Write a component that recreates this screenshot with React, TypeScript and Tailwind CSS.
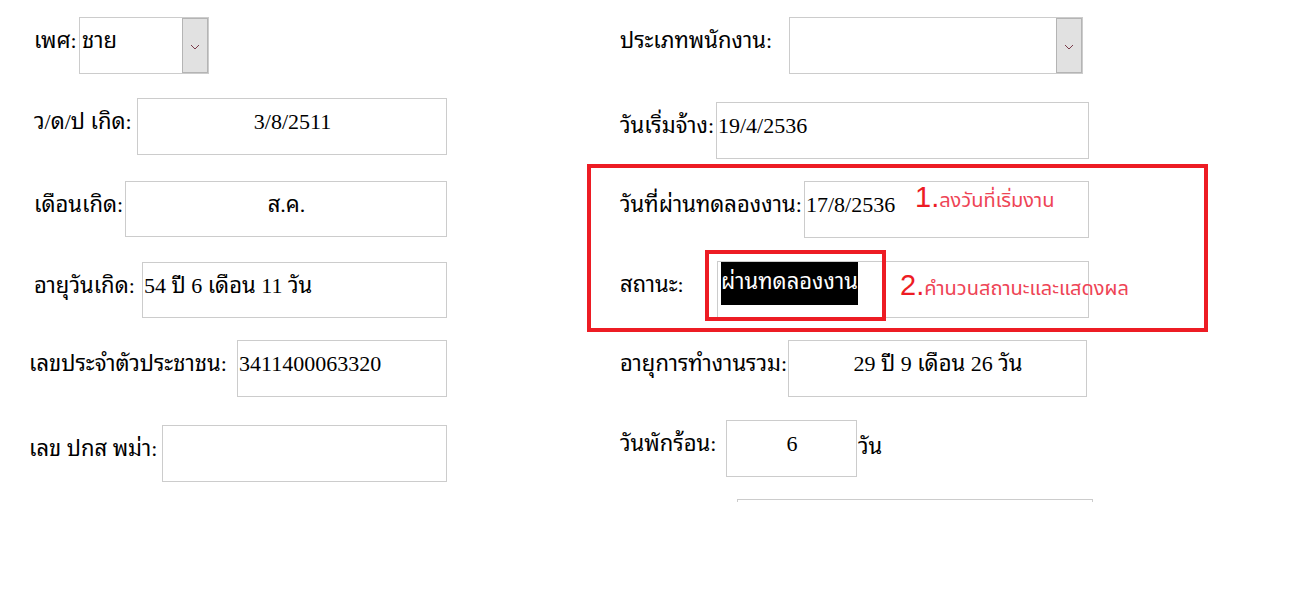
import React from "react";

const serif = "font-['Liberation_Serif','Noto_Sans_Thai_Looped','Times_New_Roman',serif]";

function Chevron() {
  return (
    <svg width="10" height="6" viewBox="0 0 10 6" className="mt-[2px]">
      <path d="M1 1 L5 5 L9 1" fill="none" stroke="#7a3b4a" strokeWidth="1" />
    </svg>
  );
}

function Combo({ w, value }: { w: string; value?: string }) {
  return (
    <div className={`flex h-[57px] border border-[#cccccc] bg-white ${w}`}>
      <div className="flex-1 pl-[2px] pt-[8px] leading-[30px] text-[22px] text-black">{value}</div>
      <div className="flex w-[26px] items-center justify-center border border-[#b4b4b4] bg-[#e1e1e1]">
        <Chevron />
      </div>
    </div>
  );
}

function Box({
  w,
  h = "h-[57px]",
  children,
  center,
}: {
  w: string;
  h?: string;
  children?: React.ReactNode;
  center?: boolean;
}) {
  return (
    <div
      className={`whitespace-nowrap border border-[#cccccc] bg-white pl-[1px] pt-[8px] leading-[30px] text-[22px] text-black ${w} ${h} ${
        center ? "text-center" : ""
      }`}
    >
      {children}
    </div>
  );
}

function Label({ w, children }: { w: string; children: React.ReactNode }) {
  return (
    <div className={`shrink-0 whitespace-nowrap pt-[9px] leading-[30px] text-[22px] text-black ${w}`}>
      {children}
    </div>
  );
}

export default function App() {
  return (
    <div className={`relative h-[589px] w-[1296px] overflow-hidden bg-white ${serif}`}>
      <div className="flex pl-[29px]">
        {/* left column */}
        <div className="flex w-[591px] flex-col pt-[17px]">
          <div className="flex pl-[5px]">
            <Label w="w-[45px]">เพศ:</Label>
            <Combo w="w-[130px]" value="ชาย" />
          </div>
          <div className="mt-[24px] flex pl-[5px]">
            <Label w="w-[103px]">ว/ด/ป เกิด:</Label>
            <Box w="w-[310px]" center>
              3/8/2511
            </Box>
          </div>
          <div className="mt-[26px] flex pl-[5px]">
            <Label w="w-[91px]">เดือนเกิด:</Label>
            <Box w="w-[322px]" h="h-[56px]" center>
              ส.ค.
            </Box>
          </div>
          <div className="mt-[25px] flex pl-[5px]">
            <Label w="w-[108px]">อายุวันเกิด:</Label>
            <Box w="w-[305px]" h="h-[56px]">
              54 ปี 6 เดือน 11 วัน
            </Box>
          </div>
          <div className="mt-[22px] flex">
            <Label w="w-[208px]">เลขประจำตัวประชาชน:</Label>
            <Box w="w-[210px]">3411400063320</Box>
          </div>
          <div className="mt-[28px] flex">
            <Label w="w-[133px]">เลข ปกส พม่า:</Label>
            <Box w="w-[285px]" />
          </div>
        </div>

        {/* right column */}
        <div className="flex flex-col pt-[17px]">
          <div className="flex">
            <Label w="w-[169px]">ประเภทพนักงาน:</Label>
            <Combo w="w-[294px]" />
          </div>
          <div className="mt-[28px] flex">
            <Label w="w-[96px]">วันเริ่มจ้าง:</Label>
            <Box w="w-[373px]">19/4/2536</Box>
          </div>
          <div className="mt-[22px] flex">
            <Label w="w-[184px]">วันที่ผ่านทดลองงาน:</Label>
            <Box w="w-[285px]">17/8/2536</Box>
          </div>
          <div className="mt-[23px] flex">
            <Label w="w-[97px]">สถานะ:</Label>
            <div className="h-[57px] w-[372px] border border-[#cccccc] bg-white pl-[3px]">
              <span className="inline-block h-[43px] whitespace-nowrap bg-black pt-[5px] leading-[30px] text-[22px] text-white">
                ผ่านทดลองงาน
              </span>
            </div>
          </div>
          <div className="mt-[22px] flex">
            <Label w="w-[168px]">อายุการทำงานรวม:</Label>
            <Box w="w-[299px]" center>
              29 ปี 9 เดือน 26 วัน
            </Box>
          </div>
          <div className="mt-[23px] flex">
            <Label w="w-[106px]">วันพักร้อน:</Label>
            <Box w="w-[131px]" center>
              6
            </Box>
            <div className="pl-[1px] pt-[12px] leading-[30px] text-[22px] text-black">วัน</div>
          </div>
          <div className="mt-[22px] flex">
            <div className="ml-[117px] h-[3px] w-[356px] border-x border-t border-[#cccccc]" />
          </div>
        </div>
      </div>

      {/* annotations */}
      <div className="pointer-events-none absolute left-[587px] top-[164px] h-[168px] w-[621px] border-[4px] border-[#ed1c24]" />
      <div className="pointer-events-none absolute left-[705px] top-[250px] h-[71px] w-[181px] border-[4px] border-[#ed1c24]" />
      <div className="pointer-events-none absolute left-[915px] top-[180px] flex items-baseline whitespace-nowrap font-['Liberation_Sans','Noto_Sans_Thai',Arial,sans-serif]">
        <span className="text-[29px] leading-[34px] text-[#ed1c24]">1.</span>
        <span className="text-[20px] text-[#ee4455]">ลงวันที่เริ่มงาน</span>
      </div>
      <div className="pointer-events-none absolute left-[900px] top-[268px] flex items-baseline whitespace-nowrap font-['Liberation_Sans','Noto_Sans_Thai',Arial,sans-serif]">
        <span className="text-[29px] leading-[34px] text-[#ed1c24]">2.</span>
        <span className="text-[20px] text-[#ee4455]">คำนวนสถานะและแสดงผล</span>
      </div>
    </div>
  );
}
